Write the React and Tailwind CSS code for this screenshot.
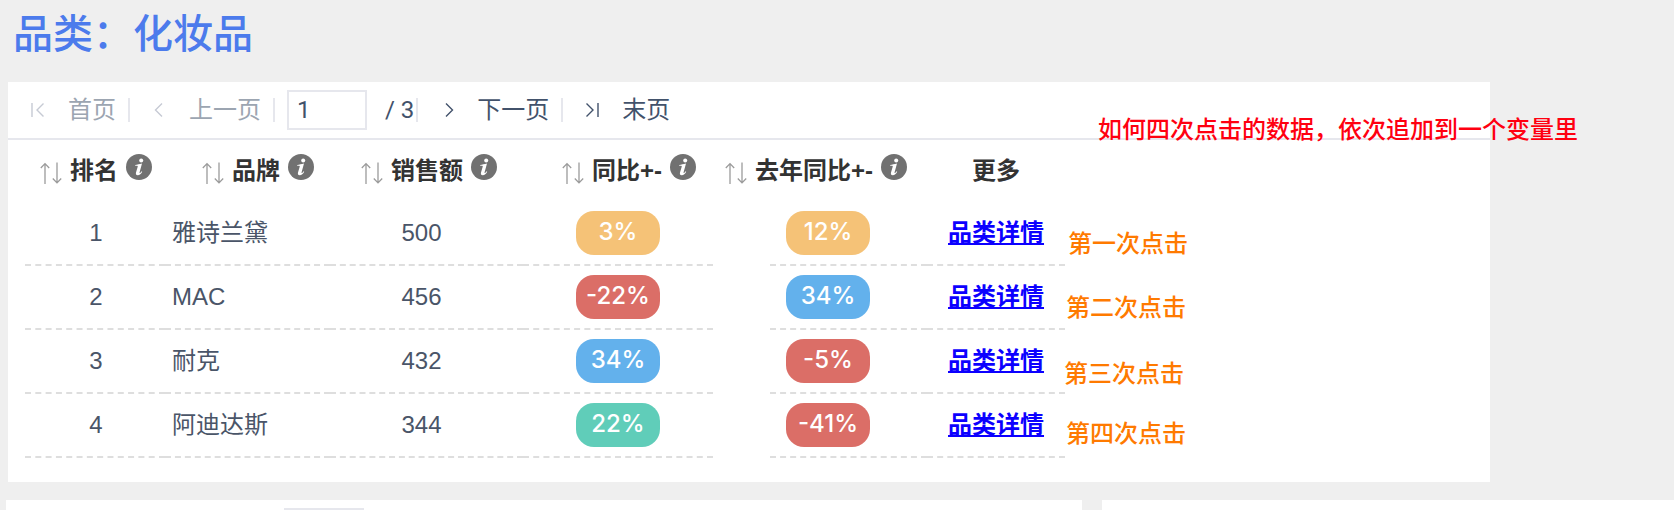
import React from "react";

const PILL = {
  amber: "bg-[#f5c277]",
  red: "bg-[#db6e67]",
  blue: "bg-[#63b1ec]",
  green: "bg-[#60cdb9]",
};

const rows = [
  { rank: 1, brand: "雅诗兰黛", sales: 500, yoy: ["3%", "amber"], last: ["12%", "amber"] },
  { rank: 2, brand: "MAC", sales: 456, yoy: ["-22%", "red"], last: ["34%", "blue"] },
  { rank: 3, brand: "耐克", sales: 432, yoy: ["34%", "blue"], last: ["-5%", "red"] },
  { rank: 4, brand: "阿迪达斯", sales: 344, yoy: ["22%", "green"], last: ["-41%", "red"] },
];

const notes = [
  { text: "第一次点击", place: "left-[1060px] top-[146px]" },
  { text: "第二次点击", place: "left-[1058px] top-[210px]" },
  { text: "第三次点击", place: "left-[1056px] top-[276px]" },
  { text: "第四次点击", place: "left-[1058px] top-[336px]" },
];

function PageIcon({ d, className }) {
  return (
    <svg viewBox="0 0 16 16" className={`h-4 w-4 shrink-0 ${className}`} fill="none" stroke="currentColor" strokeWidth="1.4" aria-hidden="true">
      <path d={d} />
    </svg>
  );
}

function PageButton({ label, d, disabled }) {
  return (
    <button type="button" disabled={disabled} className={`flex items-center gap-[23px] ${disabled ? "text-[#9ca5b1]" : "text-[#42526b]"}`}>
      <PageIcon d={d} className={disabled ? "text-[#c6cad4]" : "text-[#42526b]"} />
      {label}
    </button>
  );
}

function Divider({ className = "" }) {
  return <span className={`h-6 w-0.5 shrink-0 bg-[#e6e7ed] ${className}`} />;
}

function SortLabel({ children, pad }) {
  return (
    <div className={`flex items-center whitespace-nowrap ${pad}`}>
      <button type="button" aria-label="排序" className="mt-1 mr-2 shrink-0">
        <svg viewBox="0 0 22 22" className="h-[22px] w-[22px]" fill="none" stroke="#9b9b9b" strokeWidth="1.3">
          <path d="M5 22V2M0.8 6L5 1.6L9.2 6M17 0.5V20.5M12.8 16.5L17 20.9L21.2 16.5" />
        </svg>
      </button>
      {children}
      <button type="button" aria-label="说明" className="mb-2 ml-2 shrink-0">
        <svg viewBox="0 0 26 26" className="h-[26px] w-[26px]">
          <circle cx="13" cy="13" r="13" fill="#717171" />
          <circle cx="15.2" cy="6.6" r="2" fill="#fff" />
          <path d="M9.2 11C11.5 10.7 13.2 10.2 16 9.6L13.6 18.2C13.4 19 13.6 19.2 14.1 18.9C14.7 18.5 15.1 17.9 15.5 17.3L16.2 17.8C15.1 19.8 13.6 21.2 11.7 21.2C10.1 21.2 9.6 20.1 10 18.5L11.7 12.7C11.9 12 11.6 11.8 10.9 11.8H9.2Z" fill="#fff" />
        </svg>
      </button>
    </div>
  );
}

function Pill({ value }) {
  return (
    <span className={`flex h-11 w-21 items-center justify-center rounded-[18px] pb-0.5 font-['Inter',sans-serif] font-medium text-white ${PILL[value[1]]}`}>
      {value[0]}
    </span>
  );
}

export default function App() {
  const line = "border-b-2 border-dashed border-[#dedede] p-0";
  return (
    <div className="flex h-screen flex-col overflow-hidden bg-[#efefef] font-['Liberation_Sans','Noto_Sans_CJK_SC',sans-serif] text-2xl leading-8 text-[#4a5568]">
      <h1 className="h-[82px] shrink-0 pt-1.5 pl-[13px] text-[40px] leading-[56px] font-medium text-[#4c7bec]">品类：化妆品</h1>

      <section className="relative mr-[184px] ml-2 h-[400px] shrink-0 bg-white">
        <nav aria-label="分页" className="flex h-[58px] items-center border-b-2 border-[#e6e7ed] pl-[21px] font-['Roboto','Noto_Sans_CJK_SC',sans-serif] whitespace-nowrap">
          <PageButton label="首页" disabled d="M3 1V15M14.5 1.5L8 8L14.5 14.5" />
          <Divider className="mr-5 ml-3" />
          <PageButton label="上一页" disabled d="M12 1.5L5.5 8L12 14.5" />
          <Divider className="mx-3" />
          <input aria-label="页码" defaultValue="1" className="h-10 w-20 border-2 border-[#e6e7ed] bg-white pl-2 text-[#42526b] outline-none" />
          <span className="ml-[18px] text-[#42526b]">/ 3</span>
          <Divider className="mr-5 ml-0.5" />
          <PageButton label="下一页" d="M8 1.5L14.5 8L8 14.5" />
          <Divider className="mr-5 ml-3" />
          <PageButton label="末页" d="M3.5 1.5L10 8L3.5 14.5M15 1V15" />
        </nav>

        <table className="ml-[17px] w-[1040px] table-fixed border-separate border-spacing-0">
          <colgroup>
            <col className="w-[140px]" />
            <col className="w-[165px]" />
            <col className="w-[193px]" />
            <col className="w-[190px]" />
            <col className="w-[57px]" />
            <col className="w-[157px]" />
            <col className="w-[138px]" />
          </colgroup>
          <thead className="text-[#333333]">
            <tr className="h-[62px]">
              <th className="p-0"><SortLabel pad="pl-[15px]">排名</SortLabel></th>
              <th className="p-0"><SortLabel pad="pl-[37px]">品牌</SortLabel></th>
              <th className="p-0"><SortLabel pad="pl-[31px]">销售额</SortLabel></th>
              <th className="p-0"><SortLabel pad="pl-[39px]">同比+-</SortLabel></th>
              <th colSpan={2} className="p-0"><SortLabel pad="pl-3">去年同比+-</SortLabel></th>
              <th className="p-0">更多</th>
            </tr>
          </thead>
          <tbody>
            {rows.map((r) => (
              <tr key={r.rank} className="h-16">
                <td className={`${line} text-center`}><span className="pl-0.5">{r.rank}</span></td>
                <td className={line}><span className="pl-[7px]">{r.brand}</span></td>
                <td className={`${line} text-center`}><span className="pr-2.5">{r.sales}</span></td>
                <td className={line}><div className="flex justify-center"><Pill value={r.yoy} /></div></td>
                <td className="p-0" />
                <td className={line}><div className="pl-4"><Pill value={r.last} /></div></td>
                <td className={`${line} text-center`}>
                  <a href="#detail" className="font-bold text-[#0c00ff] underline">品类详情</a>
                </td>
              </tr>
            ))}
          </tbody>
        </table>

        <p className="absolute top-8 left-[1090px] font-medium whitespace-nowrap text-[#ff0010]">
          如何四次点击的数据，依次追加到一个变量里
        </p>
        {notes.map((n) => (
          <p key={n.text} className={`absolute font-medium whitespace-nowrap text-[#ff7a00] ${n.place}`}>{n.text}</p>
        ))}
      </section>

      <div className="mt-[18px] ml-1.5 flex min-h-0 flex-1 gap-5">
        <section className="min-w-0 flex-[1076] overflow-hidden bg-white">
          <div className="pt-2 pl-[278px]">
            <input aria-label="下方列表页码" className="block h-10 w-20 border-2 border-[#e6e7ed] bg-white outline-none" />
          </div>
        </section>
        <section className="min-w-0 flex-[572] bg-white" />
      </div>
    </div>
  );
}
